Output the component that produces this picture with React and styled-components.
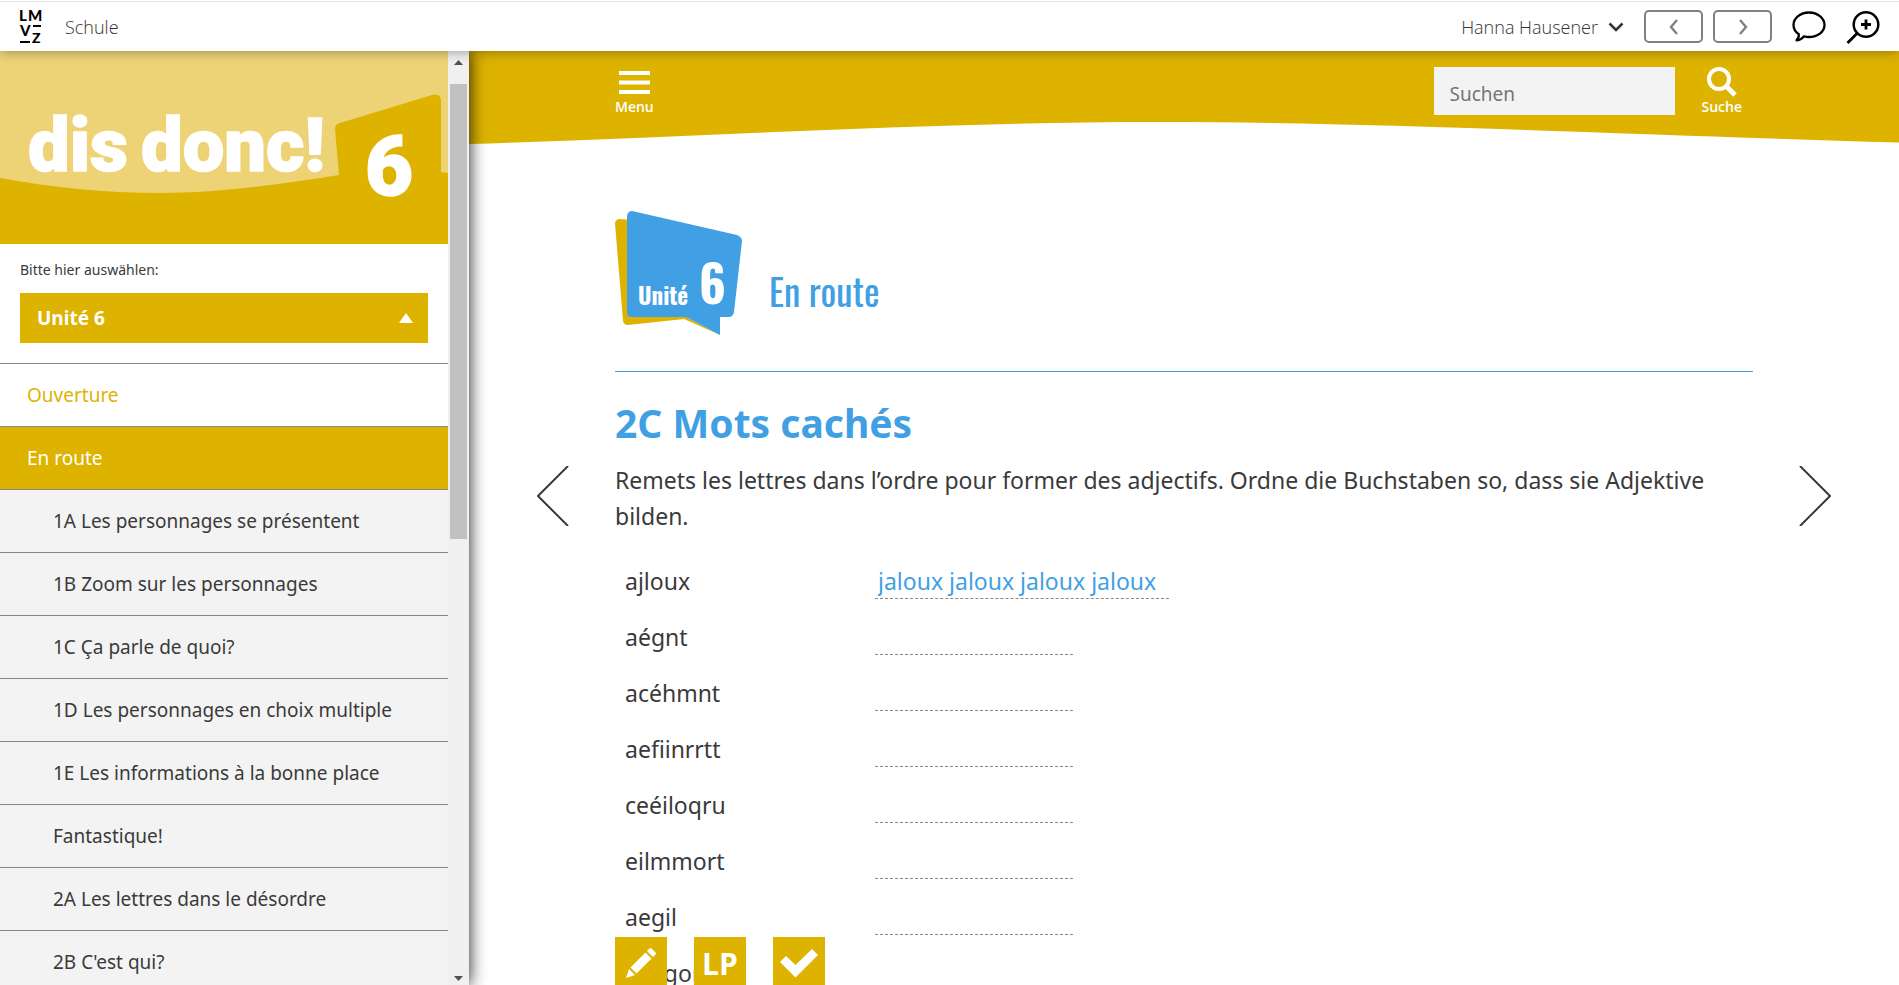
import React from "react";
import styled, { createGlobalStyle } from "styled-components";

const gold = "#ddb300";
const goldLight = "#edd376";
const blue = "#419fe3";
const ink = "#3a3a3a";
const bodyFont = `"Noto Sans", "Open Sans", sans-serif`;
const barFont = `"Open Sans", "Noto Sans", sans-serif`;
const narrowFont = `"Oswald", "Liberation Sans Narrow", "Open Sans Condensed", "Roboto Condensed", "DejaVu Sans Condensed", sans-serif`;

const GlobalStyle = createGlobalStyle`
  *, *::before, *::after { box-sizing: border-box; }
  body {
    margin: 0;
    overflow: hidden;
    background: #fff;
    color: ${ink};
    font-family: ${bodyFont};
  }
  button, input, select { font: inherit; color: inherit; }
  button { padding: 0; border: 0; background: none; cursor: pointer; }
  svg { display: block; }
`;

const Page = styled.div`
  display: flex;
  flex-direction: column;
  height: 100vh;
`;

/* Top bar */
const TopBar = styled.header`
  position: relative;
  z-index: 3;
  display: flex;
  align-items: center;
  height: 51px;
  flex: none;
  padding: 2px 19px 0 20px;
  background: #fff;
  box-shadow: 0 0 12px rgba(0, 0, 0, 0.4);
  font-family: ${barFont};
  font-size: 18px;
  font-weight: 300;
  color: #333;

  &::before {
    content: "";
    position: absolute;
    inset: 1px 0 auto;
    height: 1px;
    background: #e2e2e2;
  }
`;

const HomeLink = styled.a`
  display: flex;
  align-items: center;
  gap: 20px;
  color: inherit;
  text-decoration: none;
`;

const BarActions = styled.div`
  display: flex;
  align-items: center;
  margin-left: auto;
`;

const UserButton = styled.button`
  display: flex;
  align-items: center;
  gap: 10px;
  margin-right: 20px;
`;

const PagerButton = styled.button`
  display: grid;
  place-items: center;
  width: 59px;
  height: 33px;
  margin-right: 10px;
  border: 2px solid #808080;
  border-radius: 5px;
  color: #808080;
`;

const IconButton = styled.button`
  margin-left: ${(p) => p.$gap}px;
`;

/* Sidebar */
const Columns = styled.div`
  display: flex;
  flex: 1;
  min-height: 0;
`;

const Sidebar = styled.aside`
  position: relative;
  z-index: 2;
  display: flex;
  flex: none;
  width: 469px;
  background: #fff;
  box-shadow: 0 0 16px rgba(0, 0, 0, 0.9);
`;

const SidebarBody = styled.div`
  flex: 1;
  min-width: 0;
  overflow: hidden;
`;

const Cover = styled.svg`
  width: 100%;
  height: 193px;
  background: ${goldLight};
`;

const Picker = styled.div`
  padding: 15px 20px 20px;
`;

const PickerLabel = styled.label`
  display: block;
  padding-bottom: 12px;
  font-size: 14px;
  line-height: 22px;
`;

const SelectWrap = styled.div`
  position: relative;

  svg {
    position: absolute;
    top: 20px;
    right: 15px;
    pointer-events: none;
  }
`;

const UnitSelect = styled.select`
  appearance: none;
  display: block;
  width: 100%;
  height: 50px;
  padding: 0 17px;
  border: 0;
  border-radius: 0;
  background: ${gold};
  color: #fff;
  font-size: 19px;
  font-weight: 700;
`;

const NavList = styled.ul`
  margin: 0;
  padding: 0;
  list-style: none;
`;

const NavLink = styled.a`
  display: block;
  height: 63px;
  padding-left: ${(p) => (p.$sub ? 53 : 27)}px;
  border-top: 1px solid #85878a;
  background: ${(p) => (p.$active ? gold : p.$sub ? "#f3f3f3" : "#fff")};
  color: ${(p) => (p.$active ? "#fff" : p.$sub ? ink : gold)};
  font-size: 19px;
  line-height: 62px;
  text-decoration: none;
`;

const ScrollTrack = styled.div`
  display: flex;
  flex-direction: column;
  align-items: center;
  width: 21px;
  padding: 9px 0 4px;
  background: #f0f0f0;
`;

const ScrollThumb = styled.div`
  width: 17px;
  height: 455px;
  margin: 19px 0 auto;
  background: #c1c1c1;
`;

/* Main column */
const Main = styled.main`
  position: relative;
  flex: 1;
  min-width: 0;
  overflow: hidden;
`;

const Banner = styled.div`
  position: relative;
  display: flex;
  justify-content: space-between;
  align-items: flex-start;
  height: 93px;
  padding: 16px 157px 0 146px;
  color: #fff;
`;

const BannerShape = styled.svg`
  position: absolute;
  inset: 0;
  width: 100%;
  height: 100%;
`;

const BannerButton = styled.button`
  position: relative;
  display: flex;
  flex-direction: column;
  align-items: center;
  font-family: ${barFont};
  font-size: 14px;
  font-weight: 600;
  line-height: 20px;

  svg { height: 30px; }
`;

const SearchForm = styled.form`
  position: relative;
  display: flex;
  gap: 26px;
`;

const SearchInput = styled.input`
  width: 241px;
  height: 48px;
  padding: 5px 15px 0;
  border: 0;
  background: #f3f3f3;
  font-size: 19px;

  &::placeholder { color: #757575; opacity: 1; }
`;

const Stage = styled.div`
  display: flex;
  align-items: flex-start;
  padding: 67px 68px 0;
`;

const PageArrow = styled.a`
  flex: none;
  margin-top: 255px;
  color: ${ink};
`;

const Article = styled.article`
  flex: 1;
  min-width: 0;
  margin: 0 46px;
`;

const UnitHeader = styled.div`
  display: flex;
  height: 161px;
  border-bottom: 1px solid ${blue};
`;

const SectionName = styled.h2`
  margin: 56px 0 0 26px;
  color: ${blue};
  font-family: ${narrowFont};
  font-size: 37px;
  font-weight: 400;
  line-height: 48px;
`;

const Title = styled.h1`
  margin: 23px 0 11px;
  color: ${blue};
  font-size: 39px;
  line-height: 56px;
`;

const Instruction = styled.p`
  margin: 0 0 30px;
  font-size: 23px;
  line-height: 36px;
`;

const AnswerRow = styled.div`
  display: flex;
  align-items: baseline;
  height: 56px;
  padding-left: 10px;
  font-size: 23px;
  line-height: 34px;
`;

const AnswerLabel = styled.label`
  width: 250px;
`;

const AnswerInput = styled.input`
  width: ${(p) => (p.$wide ? 294 : 198)}px;
  height: 34px;
  padding: 0 3px;
  border: 0;
  border-bottom: 1px dashed #888;
  background: none;
  color: ${blue};
`;

const Tools = styled.div`
  position: absolute;
  left: 146px;
  bottom: -4px;
  display: flex;
  gap: 27px;
`;

const ToolButton = styled.button`
  display: grid;
  place-items: center;
  width: 52px;
  height: 52px;
  background: ${gold};
  color: #fff;
  font-family: ${barFont};
  font-size: 30px;
  font-weight: 700;
`;

const LmvzLogo = () => (
  <svg width="25" height="35" viewBox="0 0 25 35" overflow="visible" fontFamily="Lato, sans-serif" fontWeight="900" fontSize="15" aria-label="LMVZ">
    <text x="-1" y="12">L</text>
    <text x="8" y="12">M</text>
    <text x="0" y="27">V</text>
    <text x="12" y="34" fontSize="14">Z</text>
    <path d="M13 17h8M0 33h10" stroke="#000" strokeWidth="2" />
  </svg>
);

const Chevron = ({ d, size = 16, width = 2 }) => (
  <svg width={size} height={size} viewBox="0 0 16 16" fill="none" stroke="currentColor" strokeWidth={width}>
    <path d={d} />
  </svg>
);

const BubbleIcon = () => (
  <svg width="34" height="32" viewBox="0 0 34 32" fill="none" stroke="#000" strokeWidth="2.300" strokeLinejoin="round">
    <path d="M17 1.500c8.500 0 15.500 5.500 15.500 12.500S25.500 26 17 26c-2 0-3.500-.2-5-.7-2 2.500-4.500 4-7.500 4 1.800-1.800 2.500-3.800 2.300-6C3.500 21 1.500 18 1.500 14 1.500 7 8.500 1.500 17 1.500Z" />
  </svg>
);

const ZoomIcon = () => (
  <svg width="34" height="34" viewBox="0 0 34 34" fill="none" stroke="#000" strokeWidth="2.500">
    <circle cx="20" cy="14.500" r="12.300" />
    <path d="M20 9.500v10M15 14.500h10M11.500 23 1.500 33" strokeWidth="2.800" />
  </svg>
);

const CoverArt = () => (
  <Cover viewBox="0 0 448 193" preserveAspectRatio="xMinYMin slice" role="img" aria-label="dis donc! 6">
    <path
      fill={gold}
      d="M0 127C50 136 105 142 160 142c60 0 115-8 179-18l-4-46q0-5 5-6l92-28q9-2 9 6v71l7 1v71H0Z"
    />
    <g fill="#fff" stroke="#fff" strokeWidth="1.500" fontFamily="Roboto, sans-serif" fontWeight="900">
      <text x="28" y="120" fontSize="74">dis</text>
      <text x="141" y="120" fontSize="74">donc!</text>
      <text x="365" y="144" fontSize="83">6</text>
    </g>
  </Cover>
);

const UnitBadge = () => (
  <svg width="128" height="125" viewBox="0 0 128 125" role="img" aria-label="Unité 6">
    <path fill={gold} d="M0 12q1-4 5-4l12 1 56 98 32 17-36-16-56 6q-4 0-5-4Z" />
    <path fill={blue} d="M12 5q1-5 5-5l105 24q5 2 5 6l-8 71q-1 5-5 5h-9v18l-34-18H17q-5 0-5-5Z" />
    <g fill="#fff" fontFamily={narrowFont} fontWeight="700">
      <text x="23" y="94" fontSize="23">Unité</text>
      <text x="84" y="93" fontSize="50">6</text>
    </g>
  </svg>
);

const topics = [
  { label: "Ouverture" },
  { label: "En route", active: true },
  { label: "1A Les personnages se présentent", sub: true },
  { label: "1B Zoom sur les personnages", sub: true },
  { label: "1C Ça parle de quoi?", sub: true },
  { label: "1D Les personnages en choix multiple", sub: true },
  { label: "1E Les informations à la bonne place", sub: true },
  { label: "Fantastique!", sub: true },
  { label: "2A Les lettres dans le désordre", sub: true },
  { label: "2B C'est qui?", sub: true },
];

const words = [
  { scrambled: "ajloux", answer: "jaloux jaloux jaloux jaloux" },
  { scrambled: "aégnt" },
  { scrambled: "acéhmnt" },
  { scrambled: "aefiinrrtt" },
  { scrambled: "ceéiloqru" },
  { scrambled: "eilmmort" },
  { scrambled: "aegil" },
  { scrambled: "aeégor" },
];

export default function App() {
  return (
    <Page>
      <GlobalStyle />
      <TopBar>
        <HomeLink href="#home">
          <LmvzLogo />
          <span>Schule</span>
        </HomeLink>
        <BarActions>
          <UserButton type="button">
            Hanna Hausener
            <Chevron d="M1.500 4.500 8 11l6.500-6.500" width={2.6} />
          </UserButton>
          <PagerButton type="button" aria-label="Zurück">
            <Chevron d="M11 1 5 8l6 7" width={2.4} />
          </PagerButton>
          <PagerButton type="button" aria-label="Weiter">
            <Chevron d="M5 1l6 7-6 7" width={2.4} />
          </PagerButton>
          <IconButton type="button" aria-label="Kommentar" $gap={10}>
            <BubbleIcon />
          </IconButton>
          <IconButton type="button" aria-label="Vergrössern" $gap={20}>
            <ZoomIcon />
          </IconButton>
        </BarActions>
      </TopBar>

      <Columns>
        <Sidebar>
          <SidebarBody>
            <CoverArt />
            <Picker>
              <PickerLabel htmlFor="unit">Bitte hier auswählen:</PickerLabel>
              <SelectWrap>
                <UnitSelect id="unit" defaultValue="6">
                  <option value="6">Unité 6</option>
                </UnitSelect>
                <svg width="14" height="10" viewBox="0 0 14 10" fill="#fff">
                  <path d="M7 0l7 10H0Z" />
                </svg>
              </SelectWrap>
            </Picker>
            <NavList>
              {topics.map((t) => (
                <li key={t.label}>
                  <NavLink href="#topic" $sub={t.sub} $active={t.active}>{t.label}</NavLink>
                </li>
              ))}
            </NavList>
          </SidebarBody>
          <ScrollTrack aria-hidden="true">
            <svg width="9" height="5" viewBox="0 0 9 5" fill="#505050"><path d="M4.500 0 9 5H0Z" /></svg>
            <ScrollThumb />
            <svg width="9" height="5" viewBox="0 0 9 5" fill="#505050"><path d="M0 0h9L4.500 5Z" /></svg>
          </ScrollTrack>
        </Sidebar>

        <Main>
          <Banner>
            <BannerShape viewBox="0 0 1430 93" preserveAspectRatio="none">
              <path fill={gold} d="M0 0H1430V91.500C1140 83 900 71 690 71 460 71 230 86 0 93Z" />
            </BannerShape>
            <BannerButton type="button">
              <svg width="31" height="30" viewBox="0 0 31 30" fill="none" stroke="#fff" strokeWidth="4">
                <path d="M0 6h31M0 15.500h31M0 25h31" />
              </svg>
              Menu
            </BannerButton>
            <SearchForm role="search">
              <SearchInput type="search" placeholder="Suchen" aria-label="Suchen" />
              <BannerButton type="button">
                <svg width="31" height="30" viewBox="0 0 31 30" fill="none" stroke="#fff">
                  <circle cx="13" cy="12" r="10" strokeWidth="4" />
                  <path d="M20 19l9 9" strokeWidth="5" />
                </svg>
                Suche
              </BannerButton>
            </SearchForm>
          </Banner>

          <Stage>
            <PageArrow href="#previous" aria-label="Vorherige Seite">
              <svg width="32" height="60" viewBox="0 0 32 60" fill="none" stroke="currentColor" strokeWidth="2">
                <path d="M31 0 1 30l30 30" />
              </svg>
            </PageArrow>
            <Article>
              <UnitHeader>
                <UnitBadge />
                <SectionName>En route</SectionName>
              </UnitHeader>
              <Title>2C Mots cachés</Title>
              <Instruction>
                Remets les lettres dans l’ordre pour former des adjectifs. Ordne die Buchstaben so, dass sie Adjektive bilden.
              </Instruction>
              {words.map((w) => (
                <AnswerRow key={w.scrambled}>
                  <AnswerLabel htmlFor={w.scrambled}>{w.scrambled}</AnswerLabel>
                  <AnswerInput id={w.scrambled} type="text" defaultValue={w.answer} $wide={Boolean(w.answer)} />
                </AnswerRow>
              ))}
            </Article>
            <PageArrow href="#next" aria-label="Nächste Seite">
              <svg width="32" height="60" viewBox="0 0 32 60" fill="none" stroke="currentColor" strokeWidth="2">
                <path d="M1 0l30 30L1 60" />
              </svg>
            </PageArrow>
          </Stage>

          <Tools>
            <ToolButton type="button" aria-label="Bearbeiten">
              <svg width="32" height="32" viewBox="0 0 32 32" fill="#fff">
                <path d="M1 31l3-9 6 6ZM5.500 20.500 20.500 5.500l6 6-15 15ZM22 4l2.500-2.500q1-1 2 0l4 4q1 1 0 2L28 10Z" />
              </svg>
            </ToolButton>
            <ToolButton type="button">LP</ToolButton>
            <ToolButton type="button" aria-label="Prüfen">
              <svg width="38" height="30" viewBox="0 0 38 30" fill="#fff">
                <path d="M0 14l6-6 9.500 9L32 1l6 6-22.500 22.500Z" />
              </svg>
            </ToolButton>
          </Tools>
        </Main>
      </Columns>
    </Page>
  );
}
